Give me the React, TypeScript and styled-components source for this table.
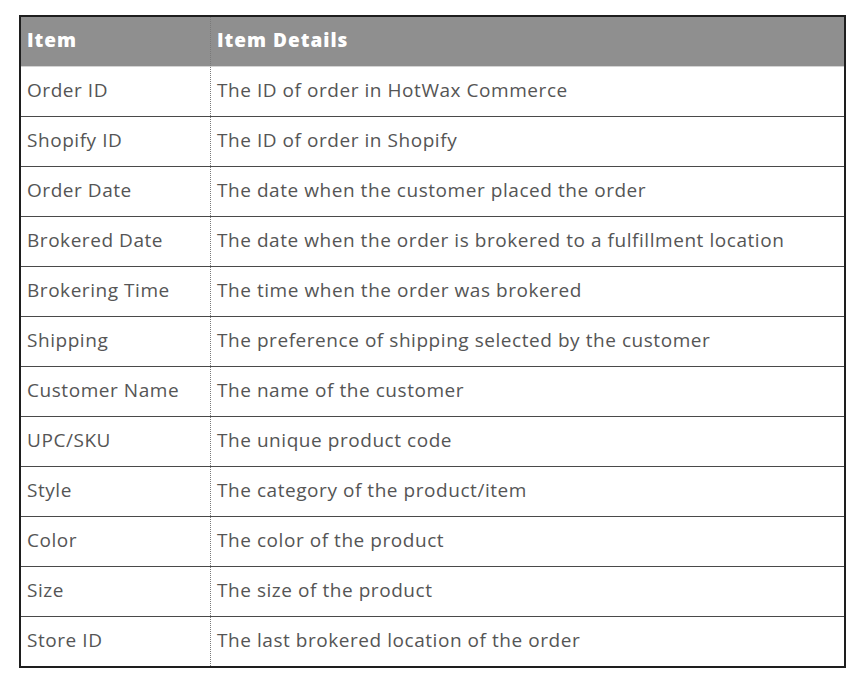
import React from "react";
import styled, { createGlobalStyle } from "styled-components";

const Global = createGlobalStyle`
  html, body { margin: 0; padding: 0; background: #ffffff; }
  body { font-family: "Open Sans", "Liberation Sans", sans-serif; }
`;

const Page = styled.div`
  padding: 15px 0 0 19px;
`;

const Table = styled.table`
  width: 827px;
  border-collapse: collapse;
  border: 2px solid #1e1e1e;
  font-size: 19px;
  line-height: 1.2;
  letter-spacing: 0.55px;
  color: #555555;
`;

const HeadCell = styled.th<{ $first?: boolean }>`
  height: 47px;
  padding: 0 0 2px 6px;
  background: #8f8f8f;
  color: #ffffff;
  font-weight: 800;
  letter-spacing: 1px;
  text-align: left;
  border-bottom: 1px solid #d4d4d4;
  border-right: ${(p) => (p.$first ? "1px dotted #7a7a7a" : "none")};
  width: ${(p) => (p.$first ? "183px" : "auto")};
`;

const Row = styled.tr`
  border-bottom: 1px solid #4a4a4a;
  &:last-child { border-bottom: none; }
`;

const Cell = styled.td<{ $first?: boolean }>`
  height: 47px;
  padding: 0 0 2px 6px;
  font-weight: 400;
  border-right: ${(p) => (p.$first ? "1px dotted #7a7a7a" : "none")};
`;

const rows: [string, string][] = [
  ["Order ID", "The ID of order in HotWax Commerce"],
  ["Shopify ID", "The ID of order in Shopify"],
  ["Order Date", "The date when the customer placed the order"],
  ["Brokered Date", "The date when the order is brokered to a fulfillment location"],
  ["Brokering Time", "The time when the order was brokered"],
  ["Shipping", "The preference of shipping selected by the customer"],
  ["Customer Name", "The name of the customer"],
  ["UPC/SKU", "The unique product code"],
  ["Style", "The category of the product/item"],
  ["Color", "The color of the product"],
  ["Size", "The size of the product"],
  ["Store ID", "The last brokered location of the order"],
];

export default function App() {
  return (
    <Page>
      <Global />
      <Table>
        <thead>
          <tr>
            <HeadCell $first>Item</HeadCell>
            <HeadCell>Item Details</HeadCell>
          </tr>
        </thead>
        <tbody>
          {rows.map(([a, b]) => (
            <Row key={a}>
              <Cell $first>{a}</Cell>
              <Cell>{b}</Cell>
            </Row>
          ))}
        </tbody>
      </Table>
    </Page>
  );
}
